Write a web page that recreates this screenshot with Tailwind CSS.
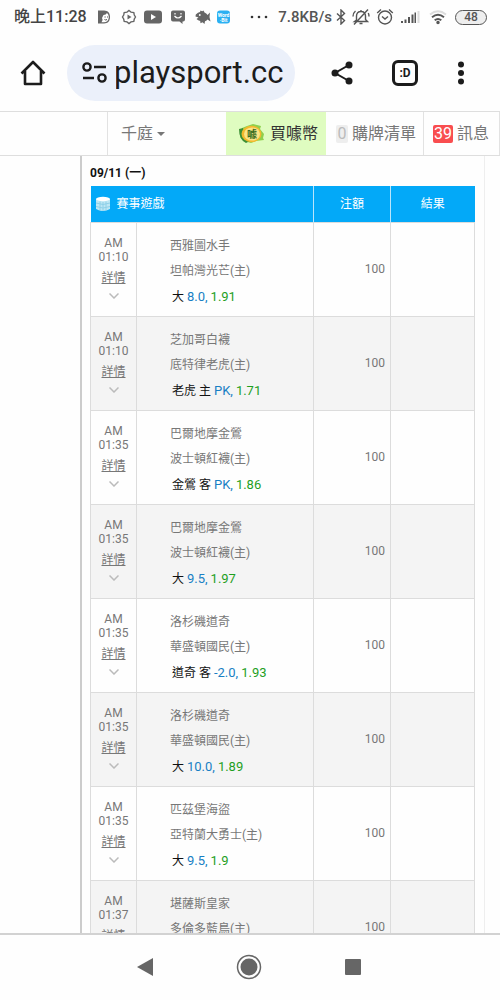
<!DOCTYPE html>
<html lang="zh-Hant">
<head>
<meta charset="utf-8">
<meta name="viewport" content="width=device-width, initial-scale=1">
<title>playsport.cc</title>
<script src="https://cdn.jsdelivr.net/npm/@tailwindcss/browser@4"></script>
</head>
<body class="flex h-screen flex-col overflow-hidden bg-[#fefefe] font-['Roboto','Noto_Sans_CJK_TC',sans-serif] text-[#777]">

<!-- Status bar -->
<div class="flex h-[34px] shrink-0 items-center justify-between pr-[13px] pl-[14px] text-[#555]">
  <div class="flex items-center">
    <span class="w-[82px] text-[16px] leading-[20px] font-medium whitespace-nowrap text-[#444]">晚上11:28</span>
    <svg class="ml-px h-4 w-3.5" viewBox="0 0 14 16"><path d="M1 1.500h6c4 0 6 2.800 6 6.500s-2 6.500-6 6.500H1z" fill="#666"/><path d="M6.500 6Q9 6 10 4q1.800 1.500 1.800 4c0 3.500-2 5.300-4.800 5.300H4.500Q6.500 11 5 9z" fill="#fff"/><path d="M7.500 8h1.200M10 8h1M7.500 10.500q1.200 1 2.500 0" fill="none" stroke="#555"/></svg>
    <svg class="ml-2.5 h-4 w-4" viewBox="0 0 16 16"><path d="M8 1.500l2 1.600 2.800.5.500 2.400L14.500 8l-1.200 2-.5 2.400-2.800.5L8 14.500l-2-1.600-2.800-.5L2.700 10 1.500 8l1.200-2 .5-2.400L6 3.100z" fill="none" stroke="#666" stroke-width="1.400"/><path d="M6.500 5.500L10.500 8l-4 2.500z" fill="#666"/></svg>
    <svg class="ml-[7px] h-4 w-[18px]" viewBox="0 0 18 16"><rect y="1.500" width="18" height="13" rx="3" fill="#666"/><path d="M7 5l5 3-5 3z" fill="#fff"/></svg>
    <svg class="ml-[9px] h-4 w-3.5" viewBox="0 0 14 16"><path d="M2 1.500h10q2 0 2 2v7q0 2-2 2h-.5v2.500L8.500 12.500H2q-2 0-2-2v-7q0-2 2-2z" fill="#666"/><path d="M4 4v1.500M10 4v1.500M3.500 7q3.500 4 7 0" fill="none" stroke="#fff" stroke-width="1.200"/></svg>
    <svg class="ml-2.5 h-4 w-4" viewBox="0 0 16 16"><path d="M.8 5.500Q3 3 5 3l.5-1.500 1.700.8L8.500 1.500l1 2q2 .8 3 2.500L15 3.500 14.500 8l1 4.500-3-2Q11.300 12 10 12.300L9.500 15l-2-1.700-2 .9L5.200 12Q3 11.500 1.500 10L3.500 8.500.5 7.500z" fill="#666"/><circle cx="4.800" cy="6" r=".9" fill="#fff"/></svg>
    <svg class="ml-1.5 h-4 w-3.5" viewBox="0 0 14 16"><rect y="1.500" width="13" height="13" rx="3" fill="#2bb0f2"/><text x="6.500" y="7.500" text-anchor="middle" font-size="5" font-weight="700" fill="#fff">Word</text><text x="6.500" y="13" text-anchor="middle" font-size="5" font-weight="700" fill="#fff">·Bit</text></svg>
  </div>
  <div class="flex items-center">
    <svg class="h-4 w-[19px]" viewBox="0 0 19 16" fill="#333"><circle cx="3" cy="8" r="1.300"/><circle cx="10" cy="8" r="1.300"/><circle cx="17" cy="8" r="1.300"/></svg>
    <span class="ml-2.5 text-[15px] leading-[20px] font-medium">7.8KB/s</span>
    <svg class="ml-1 h-4 w-2.5" viewBox="0 0 10 16" fill="none" stroke="#555" stroke-width="1.400"><path d="M1 4.500l7.500 7L5 15V1l3.500 3.500-7.500 7"/></svg>
    <svg class="ml-1.5 h-[18px] w-[18px]" viewBox="0 0 18 18" fill="none" stroke="#555" stroke-width="1.400"><path d="M2.500 13.500h13L13.500 11.500V8c0-3-1.500-4.500-4.500-4.500S4.500 5 4.500 8v4zM7.500 15.500h3M9 2v1.500M2 16.500L16 1.500M1 8.500q0-3.500 2.500-5.500M17 8.500q0-2-.7-3.500"/></svg>
    <svg class="ml-1.5 h-[18px] w-[18px]" viewBox="0 0 18 18" fill="none" stroke="#555" stroke-width="1.400"><circle cx="9" cy="9.500" r="6.500"/><path d="M1.200 5L5 1.500M16.800 5L13 1.500M6 8.500l3 2.500 3-2.500"/></svg>
    <svg class="ml-1.5 h-4 w-5" viewBox="0 0 20 16"><path d="M1 12h2v2H1zM4.500 10.500h2V14h-2zM8 8h2v6H8zM11.500 5.500h2V14h-2zM14.500 3.500h1.500V14h-1.500z" fill="#555"/><path d="M17.500 2h2v12h-2z" fill="#ddd"/></svg>
    <svg class="ml-[9px] h-4 w-[18px]" viewBox="0 0 18 16" fill="none" stroke="#555" stroke-width="1.900"><path d="M1 5.500q8-6.500 16 0" stroke="#ddd"/><path d="M3 8.300q6-5 12 0M5.700 11.300q3.300-2.800 6.600 0"/><circle cx="9" cy="13.500" r=".8" fill="#555"/></svg>
    <span class="ml-2 flex h-[15px] w-8 items-center justify-center rounded-full border border-[#555] bg-[#eee] text-[12px] leading-[12px] font-medium">48</span>
  </div>
</div>

<!-- Browser toolbar -->
<header class="flex h-[77px] shrink-0 items-center text-[#1c1c1c]">
  <button class="ml-5 h-[26px] w-[26px]" aria-label="Home"><svg viewBox="0 0 26 26" fill="none" stroke="currentColor" stroke-width="2.600" stroke-linejoin="round"><path d="M1.500 13.500L13 2l11.500 11.500M5 11v13h16V11"/></svg></button>
  <div class="ml-[21px] flex h-14 w-[228px] items-center rounded-full bg-[#ebf0fa] pl-[15px]">
    <button class="h-6 w-[26px] shrink-0" aria-label="Site settings"><svg viewBox="0 0 26 24" fill="none" stroke="currentColor" stroke-width="2.400"><circle cx="5" cy="6" r="3.600"/><path d="M12 6h12M1 17h11"/><circle cx="20" cy="17" r="3.600"/></svg></button>
    <input type="text" aria-label="網址" value="playsport.cc" class="ml-2 w-0 flex-1 bg-transparent indent-[-2px] text-[31px] leading-[40px] outline-none">
  </div>
  <div class="mr-[35px] flex flex-1 items-center justify-between pl-9">
    <button class="h-[26px] w-[22px]" aria-label="Share"><svg viewBox="0 0 22 26" fill="currentColor"><path d="M18 5L4 13l14 8" fill="none" stroke="currentColor" stroke-width="2"/><circle cx="18" cy="5" r="3.500"/><circle cx="4" cy="13" r="3.500"/><circle cx="18" cy="21" r="3.500"/></svg></button>
    <button class="flex h-[26px] w-[26px] items-center justify-center rounded-[6px] border-[3px] border-current text-[12px] leading-[14px] font-bold" aria-label="Tabs">:D</button>
    <button class="h-6 w-2" aria-label="Menu"><svg viewBox="0 0 8 24" fill="currentColor"><circle cx="4" cy="3.500" r="3"/><circle cx="4" cy="12" r="3"/><circle cx="4" cy="20.500" r="3"/></svg></button>
  </div>
</header>

<!-- Site navigation -->
<nav class="flex h-[45px] shrink-0 justify-end border-y border-[#dedede] text-[16px] leading-[24px] whitespace-nowrap">
  <button class="ml-[107px] flex flex-1 items-center border-l border-[#e2e2e2] pl-[13px]">千庭<svg class="ml-1 h-1 w-2" viewBox="0 0 8 4" fill="#777"><path d="M0 0h8L4 4z"/></svg></button>
  <a href="#" class="flex w-[100px] items-center bg-[#dffcc0] pl-3 text-[#333]">
    <svg class="mr-[5px] h-[22px] w-[27px]" viewBox="0 0 27 22"><path d="M4 5l5-2 6-2 8 2-1 3 4 5-1 4 1 2-8 1-5 2-7-2-4-4z" fill="#8ed04c"/><path d="M1 6l4-1 1 7 6 6-4 2q-7-3-7-14z" fill="#3c8f35"/><ellipse cx="13.500" cy="11" rx="10" ry="8.200" fill="#f2b92e"/><ellipse cx="14" cy="11" rx="8" ry="6.600" fill="#fbe486"/><text x="14" y="15" text-anchor="middle" font-size="10" font-weight="700" fill="#386b20">噱</text></svg>買噱幣
  </a>
  <a href="#" class="flex w-[97px] items-center pl-2.5"><span class="mr-1 flex h-[18px] w-3 items-center justify-center rounded-xs bg-[#eee] text-[#bbb]">0</span>購牌清單</a>
  <a href="#" class="flex w-[77px] items-center border-x border-[#e2e2e2] pl-[9px]"><span class="mr-1 flex h-[18px] w-5 items-center justify-center rounded-xs bg-[#f94d4f] text-white">39</span>訊息</a>
</nav>

<!-- Picks -->
<main class="min-h-0 flex-1 overflow-hidden pr-[15px] pl-20">
  <section class="border-r border-l-2 border-r-[#eee] border-l-[#ccc] pr-[9px] pl-2">
    <h2 class="pt-[7px] pb-[3px] text-[12px] leading-[20px] font-bold text-[#111]">09/11 (一)</h2>
    <table class="w-full table-fixed border-collapse text-[12px] leading-[14px]">
      <colgroup><col class="w-[46px]"><col><col class="w-[77px]"><col class="w-[84px]"></colgroup>
      <thead>
        <tr class="h-9 bg-[#03a9f8] text-white">
          <th colspan="2" class="border-r border-[#b9e5fb] pl-1 text-left font-normal"><span class="flex items-center"><svg class="mr-1.5 h-4 w-4" viewBox="0 0 16 16"><path d="M1 3v10q7 4 14 0V3z" fill="#bde7f5"/><ellipse cx="8" cy="3" rx="7" ry="2.200" fill="#fff"/><path d="M1 7q7 3 14 0M1 10.500q7 3 14 0M5 5.500v8.500M8 6v9M11 5.500v8.500" fill="none" stroke="#8fd0e8"/></svg>賽事遊戲</span></th>
          <th class="border-r border-[#b9e5fb] font-normal">注額</th>
          <th class="font-normal">結果</th>
        </tr>
      </thead>
      <tbody id="games"></tbody>
    </table>
  </section>
</main>

<!-- Android navigation keys -->
<footer class="flex h-[67px] shrink-0 items-center justify-center gap-[83px] border-t-2 border-[#d2d2d2] pr-0.5 pb-0.5 text-[#666]">
  <button class="h-5 w-4" aria-label="Back"><svg viewBox="0 0 16 20" fill="currentColor"><path d="M16 1v18L0 10z"/></svg></button>
  <button class="h-[26px] w-[26px]" aria-label="Home screen"><svg viewBox="0 0 26 26" fill="currentColor"><circle cx="13" cy="13" r="11.500" fill="none" stroke="currentColor" stroke-width="1.500"/><circle cx="13" cy="13" r="8.500"/></svg></button>
  <button class="h-4 w-4 rounded-[1px] bg-current" aria-label="Recent apps"></button>
</footer>

<script>
const games = [
  ["01:10", "西雅圖水手", "坦帕灣光芒(主)", "大", "8.0", "1.91"],
  ["01:10", "芝加哥白襪", "底特律老虎(主)", "老虎 主", "PK", "1.71"],
  ["01:35", "巴爾地摩金鶯", "波士頓紅襪(主)", "金鶯 客", "PK", "1.86"],
  ["01:35", "巴爾地摩金鶯", "波士頓紅襪(主)", "大", "9.5", "1.97"],
  ["01:35", "洛杉磯道奇", "華盛頓國民(主)", "道奇 客", "-2.0", "1.93"],
  ["01:35", "洛杉磯道奇", "華盛頓國民(主)", "大", "10.0", "1.89"],
  ["01:35", "匹茲堡海盜", "亞特蘭大勇士(主)", "大", "9.5", "1.9"],
  ["01:37", "堪薩斯皇家", "多倫多藍鳥(主)", "", "", ""]
];
document.getElementById("games").innerHTML = games.map(([time, away, home, pick, line, odds]) => `
  <tr class="h-[94px] even:bg-[#f4f4f4]">
    <td class="border border-[#dcdcdc] pt-[13px] text-center align-top">
      AM<br>${time}
      <a href="#" class="mt-[5px] block leading-[18px] underline">詳情</a>
      <svg class="mx-auto mt-1.5 h-1.5 w-2.5" viewBox="0 0 10 6" fill="none" stroke="#bbb" stroke-width="1.500"><path d="M.5.5L5 5 9.500.5"/></svg>
    </td>
    <td class="border border-[#dcdcdc] pt-[11px] pl-[33px] align-top leading-[25px] whitespace-nowrap">
      <div>${away}</div><div>${home}</div>
      ${pick && `<div class="pl-0.5 text-[#111]">${pick} <span class="text-[13px] text-[#187fc4]">${line},</span> <span class="text-[13px] text-[#1fa01f]">${odds}</span></div>`}
    </td>
    <td class="border border-[#dcdcdc] pr-[5px] text-right">100</td>
    <td class="border border-[#dcdcdc]"></td>
  </tr>`).join("");
</script>
</body>
</html>
